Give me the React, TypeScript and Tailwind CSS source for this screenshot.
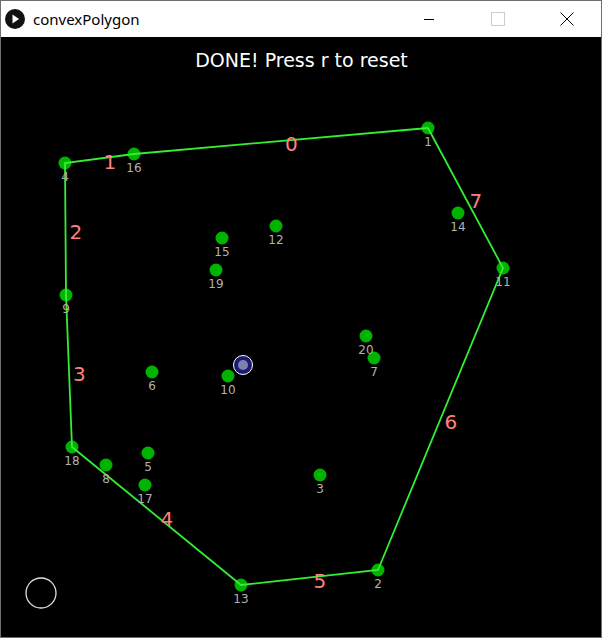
const POINTS: { id: number; x: number; y: number }[] = [
  { id: 1, x: 428, y: 128 },
  { id: 2, x: 378, y: 570 },
  { id: 3, x: 320, y: 475 },
  { id: 4, x: 65, y: 163 },
  { id: 5, x: 148, y: 453 },
  { id: 6, x: 152, y: 372 },
  { id: 7, x: 374, y: 358 },
  { id: 8, x: 106, y: 465 },
  { id: 9, x: 66, y: 295 },
  { id: 10, x: 228, y: 376 },
  { id: 11, x: 503, y: 268 },
  { id: 12, x: 276, y: 226 },
  { id: 13, x: 241, y: 585 },
  { id: 14, x: 458, y: 213 },
  { id: 15, x: 222, y: 238 },
  { id: 16, x: 134, y: 154 },
  { id: 17, x: 145, y: 485 },
  { id: 18, x: 72, y: 447 },
  { id: 19, x: 216, y: 270 },
  { id: 20, x: 366, y: 336 },
];

// hull order, edge i goes from HULL[i] to HULL[i+1]
const HULL = [1, 16, 4, 9, 18, 13, 2, 11, 1];

const pt = (id: number) => POINTS.find(p => p.id === id)!;

function Canvas() {
  const edges = HULL.slice(0, -1).map((a, i) => ({ a: pt(a), b: pt(HULL[i + 1]), i }));
  return (
    <svg width="600" height="600" viewBox="1 37 600 600" className="block">
      <rect x="1" y="37" width="600" height="600" fill="#000" />
      <text x="301.5" y="67" textAnchor="middle" fill="#fff" fontSize="19" fontFamily="'DejaVu Sans', sans-serif">
        DONE! Press r to reset
      </text>
      {POINTS.map(p => (
        <circle key={p.id} cx={p.x} cy={p.y} r="6.5" fill="#00b300" />
      ))}
      <polyline
        points={HULL.map(id => `${pt(id).x},${pt(id).y}`).join(" ")}
        fill="none"
        stroke="#33ee33"
        strokeWidth="1.8"
      />
      {POINTS.map(p => (
        <text key={p.id} x={p.x} y={p.y + 18} textAnchor="middle" fill="#b0b0b0" fontSize="12" fontFamily="'DejaVu Sans', sans-serif">
          {p.id}
        </text>
      ))}
      {edges.map(({ a, b, i }) => (
        <text key={i} x={(a.x + b.x) / 2 + 4} y={(a.y + b.y) / 2 + 10} fill="#ff8080" fontSize="20" fontFamily="'DejaVu Sans', sans-serif">
          {i}
        </text>
      ))}
      {/* selected point */}
      <circle cx="243" cy="365" r="9.5" fill="#1a1a70" stroke="#fff" strokeWidth="1" />
      <circle cx="243" cy="365" r="5" fill="#8080b0" />
      {/* reset button */}
      <circle cx="41" cy="593" r="15" fill="none" stroke="#e0e0e0" strokeWidth="1.3" />
    </svg>
  );
}

export default function App() {
  return (
    <div className="w-[602px] h-[638px] flex flex-col border border-[#6e6e6e] bg-black" style={{ fontFamily: "'Open Sans', sans-serif" }}>
      {/* Title bar */}
      <div className="h-[36px] shrink-0 bg-white flex items-center">
        <svg width="22" height="22" viewBox="0 0 22 22" className="ml-[3px]">
          <circle cx="11" cy="11" r="10" fill="#111" />
          <path d="M8.5 6.5 L15 11 L8.5 15.5 Z" fill="#fff" />
        </svg>
        <span className="ml-[7px] text-[15px] text-black" style={{ fontFamily: "'Noto Sans', sans-serif" }}>convexPolygon</span>
        <div className="flex-1" />
        <div className="w-[69px] h-[36px] flex items-center justify-center">
          <div className="w-[10px] h-px bg-black" />
        </div>
        <div className="w-[69px] h-[36px] flex items-center justify-center">
          <div className="w-[14px] h-[14px] border border-[#cccccc]" />
        </div>
        <div className="w-[69px] h-[36px] flex items-center justify-center">
          <svg width="14" height="14" viewBox="0 0 14 14">
            <path d="M0.5 0.5 L13.5 13.5 M13.5 0.5 L0.5 13.5" stroke="#000" strokeWidth="1" />
          </svg>
        </div>
      </div>
      <Canvas />
    </div>
  );
}
